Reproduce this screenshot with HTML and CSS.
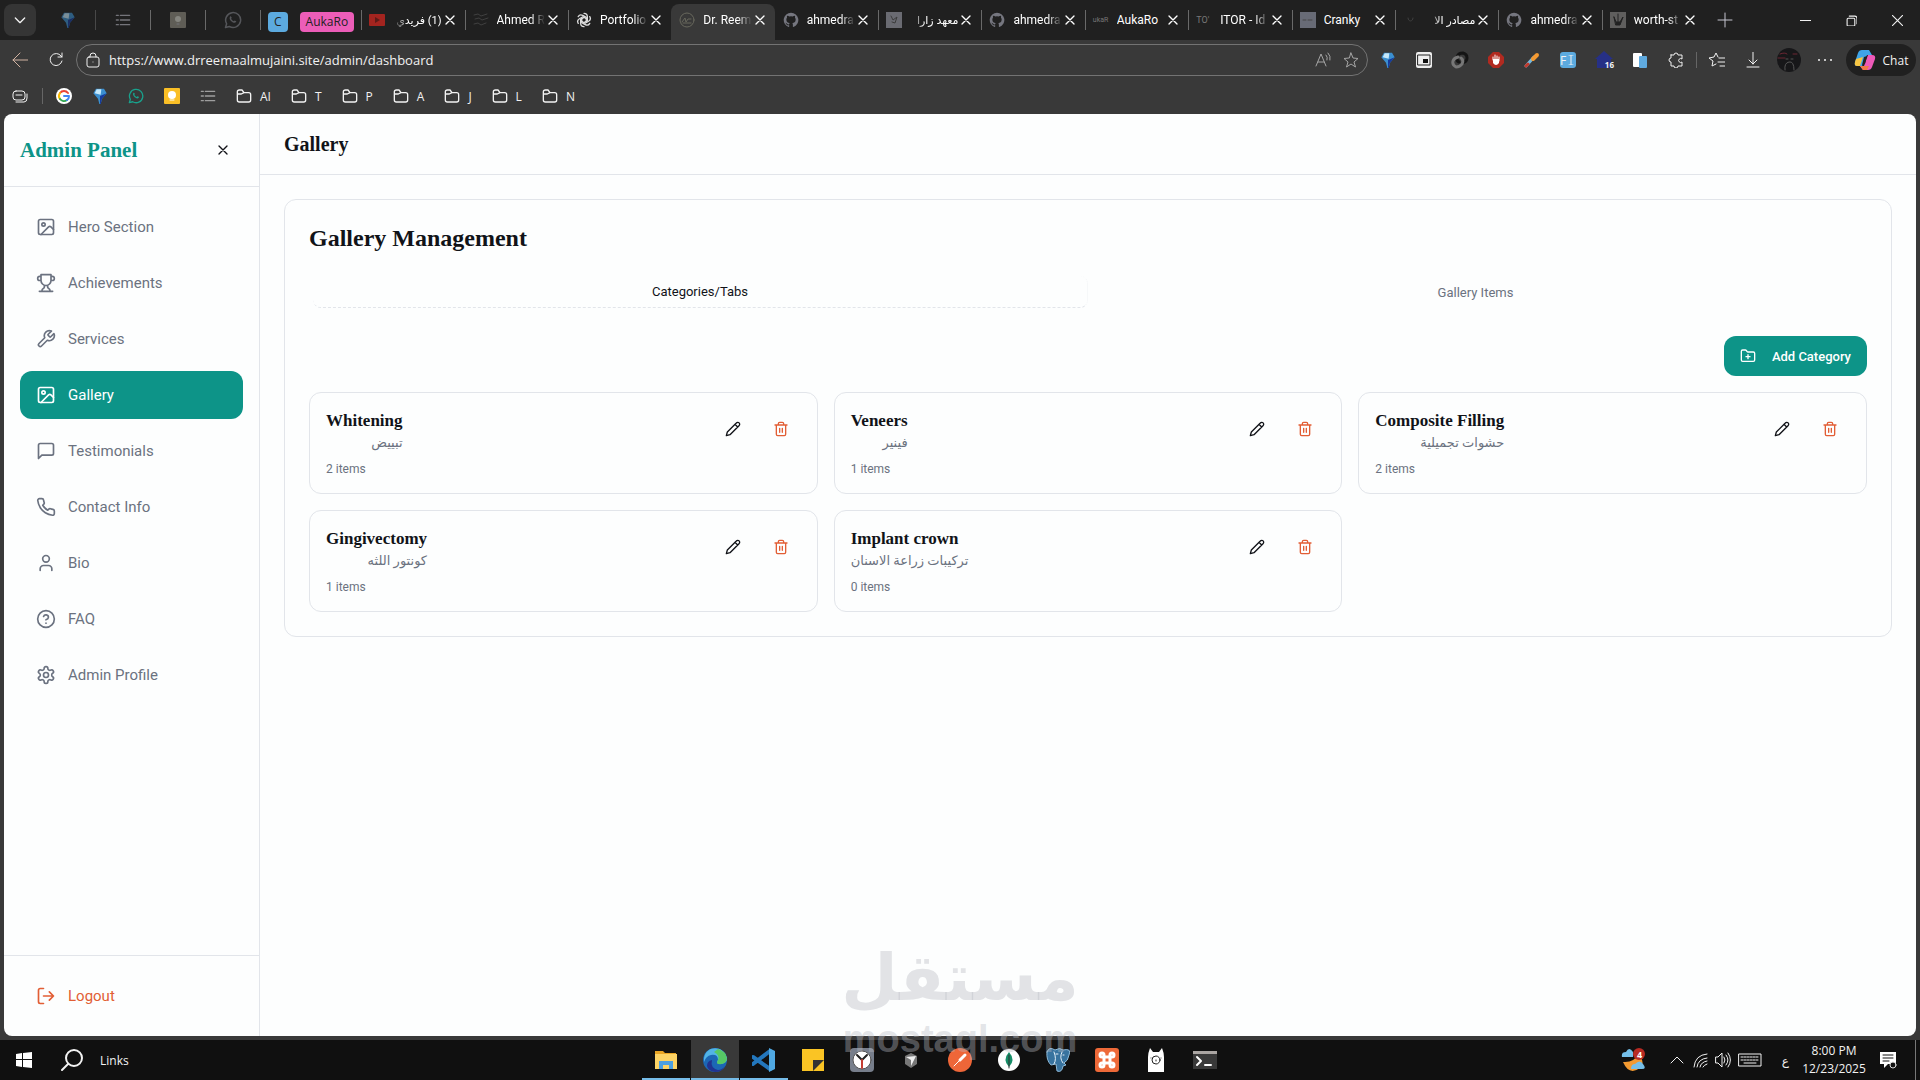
FILE: index.html
```html
<!DOCTYPE html>
<html lang="en">
<head>
    <meta charset="UTF-8">
    <meta name="viewport" content="width=device-width, initial-scale=1.0">
    <title>Dr. Reem - Admin Panel</title>
    <link rel="stylesheet" href="styles.css">
</head>
<body>

<svg class="defs" aria-hidden="true">
    <symbol id="x" viewBox="0 0 24 24"><path d="M18 6 6 18M6 6l12 12"/></symbol>
    <symbol id="chevron" viewBox="0 0 24 24"><path d="m5 9 7 7 7-7"/></symbol>
    <symbol id="image" viewBox="0 0 24 24"><rect x="3" y="3" width="18" height="18" rx="2"/><circle cx="9" cy="9" r="2"/><path d="m21 15-3.086-3.086a2 2 0 0 0-2.828 0L6 21"/></symbol>
    <symbol id="trophy" viewBox="0 0 24 24"><path d="M6 9H4.500a2.500 2.500 0 0 1 0-5H6M18 9h1.500a2.500 2.500 0 0 0 0-5H18M4 22h16M10 14.660V17c0 .55-.47.98-.97 1.210C7.850 18.750 7 20.240 7 22M14 14.660V17c0 .55.47.98.97 1.210C16.150 18.750 17 20.240 17 22M18 2H6v7a6 6 0 0 0 12 0V2Z"/></symbol>
    <symbol id="wrench" viewBox="0 0 24 24"><path d="M14.700 6.300a1 1 0 0 0 0 1.400l1.600 1.600a1 1 0 0 0 1.400 0l3.770-3.770a6 6 0 0 1-7.940 7.940l-6.910 6.910a2.120 2.120 0 0 1-3-3l6.910-6.910a6 6 0 0 1 7.940-7.940l-3.760 3.760z"/></symbol>
    <symbol id="message" viewBox="0 0 24 24"><path d="M21 15a2 2 0 0 1-2 2H7l-4 4V5a2 2 0 0 1 2-2h14a2 2 0 0 1 2 2z"/></symbol>
    <symbol id="phone" viewBox="0 0 24 24"><path d="M22 16.920v3a2 2 0 0 1-2.180 2 19.790 19.790 0 0 1-8.630-3.070 19.500 19.500 0 0 1-6-6 19.790 19.790 0 0 1-3.070-8.670A2 2 0 0 1 4.110 2h3a2 2 0 0 1 2 1.720 12.840 12.840 0 0 0 .7 2.810 2 2 0 0 1-.45 2.110L8.090 9.910a16 16 0 0 0 6 6l1.270-1.270a2 2 0 0 1 2.110-.45 12.840 12.840 0 0 0 2.810.7A2 2 0 0 1 22 16.920z"/></symbol>
    <symbol id="user" viewBox="0 0 24 24"><path d="M19 21v-2a4 4 0 0 0-4-4H9a4 4 0 0 0-4 4v2"/><circle cx="12" cy="7" r="4"/></symbol>
    <symbol id="help" viewBox="0 0 24 24"><circle cx="12" cy="12" r="10"/><path d="M9.090 9a3 3 0 0 1 5.830 1c0 2-3 3-3 3M12 17h.01"/></symbol>
    <symbol id="settings" viewBox="0 0 24 24"><path d="M12.220 2h-.44a2 2 0 0 0-2 2v.18a2 2 0 0 1-1 1.730l-.43.25a2 2 0 0 1-2 0l-.15-.08a2 2 0 0 0-2.730.73l-.22.38a2 2 0 0 0 .73 2.730l.15.1a2 2 0 0 1 1 1.720v.51a2 2 0 0 1-1 1.740l-.15.09a2 2 0 0 0-.73 2.730l.22.38a2 2 0 0 0 2.730.73l.15-.08a2 2 0 0 1 2 0l.43.25a2 2 0 0 1 1 1.730V20a2 2 0 0 0 2 2h.44a2 2 0 0 0 2-2v-.18a2 2 0 0 1 1-1.730l.43-.25a2 2 0 0 1 2 0l.15.08a2 2 0 0 0 2.730-.73l.22-.39a2 2 0 0 0-.73-2.730l-.15-.08a2 2 0 0 1-1-1.740v-.5a2 2 0 0 1 1-1.740l.15-.09a2 2 0 0 0 .73-2.730l-.22-.38a2 2 0 0 0-2.730-.73l-.15.08a2 2 0 0 1-2 0l-.43-.25a2 2 0 0 1-1-1.730V4a2 2 0 0 0-2-2z"/><circle cx="12" cy="12" r="3"/></symbol>
    <symbol id="logout" viewBox="0 0 24 24"><path d="M9 21H5a2 2 0 0 1-2-2V5a2 2 0 0 1 2-2h4M16 17l5-5-5-5M21 12H9"/></symbol>
    <symbol id="folder-plus" viewBox="0 0 24 24"><path d="M12 10v6M9 13h6M20 20a2 2 0 0 0 2-2V8a2 2 0 0 0-2-2h-7.900a2 2 0 0 1-1.690-.9L9.600 3.900A2 2 0 0 0 7.930 3H4a2 2 0 0 0-2 2v13a2 2 0 0 0 2 2Z"/></symbol>
    <symbol id="pencil" viewBox="0 0 24 24"><path d="M17 3a2.850 2.830 0 1 1 4 4L7.500 20.500 2 22l1.500-5.500ZM15 5l4 4"/></symbol>
    <symbol id="trash" viewBox="0 0 24 24"><path d="M3 6h18M19 6v14a2 2 0 0 1-2 2H7a2 2 0 0 1-2-2V6M8 6V4a2 2 0 0 1 2-2h4a2 2 0 0 1 2 2v2M10 11v6M14 11v6"/></symbol>
    <symbol id="folder" viewBox="0 0 24 24"><path d="M2 6a3 3 0 0 1 3-3h4l3 4h7a3 3 0 0 1 3 3v8a3 3 0 0 1-3 3H5a3 3 0 0 1-3-3ZM2 9h6l4-2"/></symbol>
    <symbol id="list" viewBox="0 0 24 24"><path d="M8 5h14M8 12h14M8 19h14M2 5h3M2 12h3M2 19h3"/></symbol>
    <symbol id="gem" viewBox="0 0 24 24"><g stroke="none"><path fill="#3b8fd0" d="M6 1h12l4 7-7 8-2 8h-2l-2-8-7-8z"/><path fill="#c5e8fa" d="M7 2h7l-1 8-9-2z"/><path fill="#173a9c" d="m22 8-7 8-2 8h-1V12z"/></g></symbol>
    <symbol id="whatsapp" viewBox="0 0 24 24"><path d="m2 22 1.500-5A10 10 0 1 1 7 20.600Z"/><path fill="currentColor" d="M8 7.500c1-1 1.500-.5 2.300 1.500l-.8 1.200c.8 1.600 1.800 2.500 3.500 3.300l1.300-1c2 .8 2.500 1.300 1.700 2.300-2.800 3-10.500-3.500-8-7.300Z" stroke="none"/></symbol>
    <symbol id="github" viewBox="0 0 24 24"><path fill="currentColor" stroke="none" d="M12 1a11 11 0 0 0-3.500 21.400c.6.1.8-.2.8-.5v-2c-3.100.6-3.900-1.300-3.900-1.300-.5-1.300-1.200-1.700-1.200-1.700-1-.7.100-.7.1-.7 1.100.1 1.700 1.200 1.700 1.200 1 1.700 2.600 1.200 3.300.9.100-.7.4-1.200.7-1.500-2.500-.3-5-1.200-5-5.400 0-1.200.4-2.200 1.100-3-.1-.3-.5-1.400.1-2.900 0 0 1-.3 3 1.100a10 10 0 0 1 5.600 0c2.100-1.400 3-1.100 3-1.100.6 1.500.2 2.600.1 2.900.7.800 1.100 1.800 1.100 3 0 4.200-2.500 5.100-5 5.400.4.400.8 1 .8 2.100v3c0 .3.200.6.8.5A11 11 0 0 0 12 1Z"/></symbol>
</svg>

<header class="browser">
    <div class="tabstrip">
        <button class="tab-menu" aria-label="Tab actions"><svg class="icon i16"><use href="#chevron"/></svg></button>
        <div class="pinned dim"><svg class="icon i16"><use href="#gem"/></svg></div>
        <div class="pinned"><svg class="icon i16"><use href="#list"/></svg></div>
        <div class="pinned"><svg class="icon i16" viewBox="0 0 16 16"><rect width="16" height="16" rx="1" fill="#5f5d56" stroke="none"/><circle cx="8" cy="7" r="3" fill="#85857f" stroke="none"/><path d="M7 12h2"/></svg></div>
        <div class="pinned dark"><svg class="icon i18"><use href="#whatsapp"/></svg></div>
        <div class="groups"><button class="group blue">C</button><button class="group pink">AukaRo</button></div>
        <div class="tabs">
            <div class="tab"><svg class="icon i16" viewBox="0 0 16 16"><rect y="2" width="16" height="12" rx="1" fill="#a3241f" stroke="none"/><path d="m6 5 5 3-5 3z" fill="#5c1b18" stroke="none"/></svg><span class="name" dir="rtl">(1) فريدي</span><button aria-label="Close tab"><svg class="icon"><use href="#x"/></svg></button></div>
            <div class="tab"><svg class="icon i16 faint" viewBox="0 0 16 16"><path d="m1 3 4-1 3 2 6-2M2 7l4-1 3 2 6-2M1 12l4-1 3 2 5-2"/></svg><span class="name">Ahmed R</span><button aria-label="Close tab"><svg class="icon"><use href="#x"/></svg></button></div>
            <div class="tab"><svg class="icon i16 pale" viewBox="0 0 24 24"><g stroke-width="2"><path id="petal" d="M12 2a5 5 0 0 1 5 5v6l-5 3"/><use href="#petal" transform="rotate(60 12 12)"/><use href="#petal" transform="rotate(120 12 12)"/><use href="#petal" transform="rotate(180 12 12)"/><use href="#petal" transform="rotate(240 12 12)"/><use href="#petal" transform="rotate(300 12 12)"/></g></svg><span class="name">Portfolio</span><button aria-label="Close tab"><svg class="icon"><use href="#x"/></svg></button></div>
            <div class="tab active"><svg class="icon i16 olive" viewBox="0 0 16 16"><circle cx="8" cy="8" r="7"/><path d="m3 10 3-4 1 4 2-3h3M4 11h8"/></svg><span class="name">Dr. Reem</span><button aria-label="Close tab"><svg class="icon"><use href="#x"/></svg></button></div>
            <div class="tab"><svg class="icon i16"><use href="#github"/></svg><span class="name">ahmedra</span><button aria-label="Close tab"><svg class="icon"><use href="#x"/></svg></button></div>
            <div class="tab"><svg class="icon i16" viewBox="0 0 16 16"><rect width="16" height="16" fill="#6a6b72" stroke="none"/><path d="m5 4 2 4 4-3-2 6-3-1" stroke="#3c3c3c"/></svg><span class="name" dir="rtl">معهد زارا</span><button aria-label="Close tab"><svg class="icon"><use href="#x"/></svg></button></div>
            <div class="tab"><svg class="icon i16"><use href="#github"/></svg><span class="name">ahmedra</span><button aria-label="Close tab"><svg class="icon"><use href="#x"/></svg></button></div>
            <div class="tab"><span class="favtext">ukaR</span><span class="name short">AukaRo</span><button aria-label="Close tab"><svg class="icon"><use href="#x"/></svg></button></div>
            <div class="tab"><span class="favtext big">TO'</span><span class="name">ITOR - Id</span><button aria-label="Close tab"><svg class="icon"><use href="#x"/></svg></button></div>
            <div class="tab"><svg class="icon i16" viewBox="0 0 16 16"><rect width="16" height="16" fill="#686b76" stroke="none"/><path d="M3 8h3M8 8h4" stroke="#474747"/></svg><span class="name short">Cranky</span><button aria-label="Close tab"><svg class="icon"><use href="#x"/></svg></button></div>
            <div class="tab"><svg class="icon i16 faint" viewBox="0 0 16 16"><path d="M5 6c0 4 5 4 5 0"/></svg><span class="name" dir="rtl">مصادر الا</span><button aria-label="Close tab"><svg class="icon"><use href="#x"/></svg></button></div>
            <div class="tab"><svg class="icon i16"><use href="#github"/></svg><span class="name">ahmedra</span><button aria-label="Close tab"><svg class="icon"><use href="#x"/></svg></button></div>
            <div class="tab"><svg class="icon i16" viewBox="0 0 16 16"><rect width="16" height="16" fill="#605f5e" stroke="none"/><path d="M8 2v10M4 5l2 5h4l3-5-3 8H6z" fill="#222" stroke="#222"/></svg><span class="name">worth-st</span><button aria-label="Close tab"><svg class="icon"><use href="#x"/></svg></button></div>
        </div>
        <button class="new-tab" aria-label="New tab"><svg class="icon i16" viewBox="0 0 16 16"><path d="M8 1v14M1 8h14"/></svg></button>
        <div class="window-controls">
            <button aria-label="Minimize"><svg class="icon" viewBox="0 0 10 10"><path d="M0 5h10"/></svg></button>
            <button aria-label="Restore"><svg class="icon" viewBox="0 0 10 10"><rect x="1" y="3" width="7" height="7" rx="1"/><path d="M3 1h5a2 2 0 0 1 2 2v5"/></svg></button>
            <button aria-label="Close"><svg class="icon" viewBox="0 0 10 10"><path d="m0 0 10 10M10 0 0 10"/></svg></button>
        </div>
    </div>

    <div class="toolbar">
        <button class="back" aria-label="Back"><svg class="icon i16" viewBox="0 0 16 16"><path d="M16 8H1M8 1 1 8l7 7"/></svg></button>
        <button aria-label="Reload"><svg class="icon i16" viewBox="0 0 16 16"><path d="M14 9a6 6 0 1 1-1-5l1 1M14 1v4h-4"/></svg></button>
        <div class="address">
            <svg class="icon i16" viewBox="0 0 16 16"><rect x="2" y="5" width="12" height="10" rx="2"/><path d="M5 5V4a3 3 0 0 1 6 0v1M8 10h.01"/></svg>
            <input type="text" aria-label="Address" value="https://www.drreemaalmujaini.site/admin/dashboard">
            <svg class="icon i16 muted" viewBox="0 0 16 16"><path d="M1 14 6 2l5 12M3 10h6M11 3q2 2 1 5M13 1q3 3 2 7"/></svg>
            <svg class="icon i16 muted star" viewBox="0 0 16 16"><path d="m8 1 2 5 5 .5-4 3.500 1.500 5L8 12l-4.500 3L5 10 1 6.500 6 6z"/></svg>
        </div>
        <div class="extensions">
            <button aria-label="Gem"><svg class="icon i16"><use href="#gem"/></svg></button>
            <button aria-label="Picture in picture"><svg class="icon i16" viewBox="0 0 16 16"><rect width="16" height="16" rx="2" fill="#eee" stroke="none"/><rect x="2" y="3" width="12" height="10" fill="#eee" stroke="#222"/><rect x="7" y="7" width="5" height="4" fill="#111" stroke="none"/></svg></button>
            <button aria-label="Links"><svg class="icon i18" viewBox="0 0 18 18"><path d="M8 11q-3-1-2-5 1-4 6-4 4 1 4 5 0 4-5 5" stroke="#141414" stroke-width="3"/><path d="M10 7q3 2 1 6-2 3-6 3-4-2-3-6 1-3 5-4" stroke="#777" stroke-width="3"/></svg></button>
            <button aria-label="Blocker"><svg class="icon i16" viewBox="0 0 16 16"><path d="M5 0h6l5 5v6l-5 5H5l-5-5V5z" fill="#b12a20" stroke="none"/><path d="M5 8V5M7 8V3M9 8V4M11 9V5" stroke="#fff"/><path d="M5 7h6v4q-3 4-6 0z" fill="#fff" stroke="none"/></svg></button>
            <button aria-label="Color picker"><svg class="icon i16" viewBox="0 0 16 16"><path d="m2 14 8-9" stroke="#74b8de" stroke-width="3"/><path d="m9 7 4-4" stroke="#f49a32" stroke-width="4"/><path d="m2 14 2-2" stroke="#c33a2d" stroke-width="3"/></svg></button>
            <button aria-label="Font finder" class="font-ext">F<svg class="icon" viewBox="0 0 10 10"><path d="M3 0h4M5 0v10M3 10h4"/></svg></button>
            <button aria-label="Home counter" class="count-ext"><svg class="icon i18" viewBox="0 0 18 18"><path d="m9 0 9 8h-2v9H2V8H0z" fill="#263086" stroke="none"/></svg><b>16</b></button>
            <button aria-label="Clipboard"><svg class="icon i16" viewBox="0 0 16 16"><rect x="1" y="1" width="9" height="14" rx="1" fill="#fff" stroke="none"/><rect x="7" y="4" width="8" height="12" rx="1" fill="#5faadf" stroke="none"/></svg></button>
            <button aria-label="Extensions"><svg class="icon i16" viewBox="0 0 16 16"><path d="M3 3h3a2 2 0 1 1 4 0h4v4a2 2 0 1 0 0 3v4h-4a2 2 0 1 1-4 0H3v-4a2 2 0 1 1 0-4V3z"/></svg></button>
            <span class="divider"></span>
            <button aria-label="Favorites"><svg class="icon i16" viewBox="0 0 16 16"><path d="M9 5 7 1 5 5l-5 1 4 3-1 5 4-2M10 6h6M9 10h7M11 14h5"/></svg></button>
            <button aria-label="Downloads"><svg class="icon i16" viewBox="0 0 16 16"><path d="M8 0v12M4 8l4 4 4-4M2 15h12"/></svg></button>
            <button aria-label="Profile"><svg class="icon i24" viewBox="0 0 24 24"><circle cx="12" cy="12" r="12" fill="#171719" stroke="none"/><path d="M3 6q5-2 7 0M1 10h7M16 6h4" stroke="#6c2633"/><path d="M8 22q-1-7 4-8t5 8M9 11h2M14 11h2" stroke="#555"/></svg></button>
            <button aria-label="More"><svg class="icon i16" viewBox="0 0 16 16"><path d="M2 8h.01M8 8h.01M14 8h.01" stroke-width="2"/></svg></button>
        </div>
        <button class="chat"><svg class="icon i22" viewBox="0 0 22 22"><g stroke="none"><path fill="#3ea4e8" d="M8 1h7l3 5h-5L8 17H3Q0 17 1 13L4 4q1-3 4-3z"/><path fill="#f6c543" d="m2 10 7-2-3 9H3Q0 17 1 13z"/><path fill="#ee59b8" d="M14 6h4q4 0 3 4l-3 8q-1 3-4 3H9l-3-4h4z"/><path fill="#ef7847" d="M6 17h9l-2 4H9z"/><path fill="#222" d="m10 8 3-1-2 8-3 1z"/></g></svg>Chat</button>
    </div>

    <nav class="bookmarks">
        <a href="#" aria-label="Wallet"><svg class="icon i16" viewBox="0 0 16 16"><rect x="1" y="3" width="12" height="9" rx="3"/><path d="M4 7h6M4 14h8q3 0 3-4V6"/></svg></a>
        <span class="divider"></span>
        <a href="#" aria-label="Google"><svg class="icon i16" viewBox="0 0 16 16"><circle cx="8" cy="8" r="8" fill="#fff" stroke="none"/><g stroke-width="2"><path d="M12 5a5 5 0 0 0-8 0" stroke="#ea4335"/><path d="M4 5a5 5 0 0 0 0 6" stroke="#fbbc05"/><path d="M4 11a5 5 0 0 0 7 1" stroke="#34a853"/><path d="M11 12q2-1 2-4H8" stroke="#4285f4"/></g></svg></a>
        <a href="#" aria-label="Gem"><svg class="icon i16"><use href="#gem"/></svg></a>
        <a href="#" aria-label="WhatsApp" class="green"><svg class="icon i16"><use href="#whatsapp"/></svg></a>
        <a href="#" aria-label="Keep"><svg class="icon i16" viewBox="0 0 16 16"><rect width="16" height="16" rx="1" fill="#fabf26" stroke="none"/><circle cx="8" cy="7" r="4" fill="#fff" stroke="none"/><path d="M6 12h4" stroke="#fff"/></svg></a>
        <a href="#" aria-label="List" class="dim"><svg class="icon i16"><use href="#list"/></svg></a>
        <a href="#" class="folder"><svg class="icon i16"><use href="#folder"/></svg>AI</a>
        <a href="#" class="folder"><svg class="icon i16"><use href="#folder"/></svg>T</a>
        <a href="#" class="folder"><svg class="icon i16"><use href="#folder"/></svg>P</a>
        <a href="#" class="folder"><svg class="icon i16"><use href="#folder"/></svg>A</a>
        <a href="#" class="folder"><svg class="icon i16"><use href="#folder"/></svg>J</a>
        <a href="#" class="folder"><svg class="icon i16"><use href="#folder"/></svg>L</a>
        <a href="#" class="folder"><svg class="icon i16"><use href="#folder"/></svg>N</a>
    </nav>
</header>

<div class="page">
    <aside class="sidebar">
        <div class="sidebar-header">
            <h1>Admin Panel</h1>
            <button class="icon-button" aria-label="Close menu"><svg class="icon i16"><use href="#x"/></svg></button>
        </div>
        <nav class="menu">
            <a href="#"><svg class="icon i20"><use href="#image"/></svg>Hero Section</a>
            <a href="#"><svg class="icon i20"><use href="#trophy"/></svg>Achievements</a>
            <a href="#"><svg class="icon i20"><use href="#wrench"/></svg>Services</a>
            <a href="#" class="active"><svg class="icon i20"><use href="#image"/></svg>Gallery</a>
            <a href="#"><svg class="icon i20"><use href="#message"/></svg>Testimonials</a>
            <a href="#"><svg class="icon i20"><use href="#phone"/></svg>Contact Info</a>
            <a href="#"><svg class="icon i20"><use href="#user"/></svg>Bio</a>
            <a href="#"><svg class="icon i20"><use href="#help"/></svg>FAQ</a>
            <a href="#"><svg class="icon i20"><use href="#settings"/></svg>Admin Profile</a>
        </nav>
        <div class="sidebar-footer">
            <button class="logout"><svg class="icon i20"><use href="#logout"/></svg>Logout</button>
        </div>
    </aside>

    <main>
        <div class="topbar"><h2>Gallery</h2></div>
        <section class="panel">
            <h3>Gallery Management</h3>
            <div class="switch" role="tablist">
                <button role="tab" aria-selected="true">Categories/Tabs</button>
                <button role="tab" aria-selected="false">Gallery Items</button>
            </div>
            <div class="actions">
                <button class="add"><svg class="icon i16"><use href="#folder-plus"/></svg>Add Category</button>
            </div>
            <div class="cards">
                <article class="card">
                    <div class="info"><h4>Whitening</h4><p dir="rtl">تبييض</p><small>2 items</small></div>
                    <button class="icon-button" aria-label="Edit"><svg class="icon i16"><use href="#pencil"/></svg></button>
                    <button class="icon-button delete" aria-label="Delete"><svg class="icon i16"><use href="#trash"/></svg></button>
                </article>
                <article class="card">
                    <div class="info"><h4>Veneers</h4><p dir="rtl">فينير</p><small>1 items</small></div>
                    <button class="icon-button" aria-label="Edit"><svg class="icon i16"><use href="#pencil"/></svg></button>
                    <button class="icon-button delete" aria-label="Delete"><svg class="icon i16"><use href="#trash"/></svg></button>
                </article>
                <article class="card">
                    <div class="info"><h4>Composite Filling</h4><p dir="rtl">حشوات تجميلية</p><small>2 items</small></div>
                    <button class="icon-button" aria-label="Edit"><svg class="icon i16"><use href="#pencil"/></svg></button>
                    <button class="icon-button delete" aria-label="Delete"><svg class="icon i16"><use href="#trash"/></svg></button>
                </article>
                <article class="card">
                    <div class="info"><h4>Gingivectomy</h4><p dir="rtl">كونتور اللثه</p><small>1 items</small></div>
                    <button class="icon-button" aria-label="Edit"><svg class="icon i16"><use href="#pencil"/></svg></button>
                    <button class="icon-button delete" aria-label="Delete"><svg class="icon i16"><use href="#trash"/></svg></button>
                </article>
                <article class="card">
                    <div class="info"><h4>Implant crown</h4><p dir="rtl">تركيبات زراعة الاسنان</p><small>0 items</small></div>
                    <button class="icon-button" aria-label="Edit"><svg class="icon i16"><use href="#pencil"/></svg></button>
                    <button class="icon-button delete" aria-label="Delete"><svg class="icon i16"><use href="#trash"/></svg></button>
                </article>
            </div>
        </section>
    </main>
</div>

<footer class="taskbar">
    <div class="start">
        <button aria-label="Start"><svg class="icon i16" viewBox="0 0 16 16"><path d="m0 2 6-1v6H0zM7 1l9-1v7H7zM0 8h6v7l-6-1zM7 8h9v8l-9-1z" fill="#fff" stroke="none"/></svg></button>
        <button aria-label="Search"><svg class="icon i22" viewBox="0 0 22 22"><circle cx="13" cy="9" r="8" stroke-width="2"/><path d="m7 15-6 6" stroke-width="2"/></svg></button>
        <span>Links</span>
    </div>
    <div class="apps">
        <button class="open" aria-label="File Explorer"><svg class="icon i24" viewBox="0 0 24 24"><g stroke="none"><path fill="#e9a524" d="M1 3h8l2 2h11v5H1z"/><path fill="#fcd365" d="M1 6h22v15H1z"/><path fill="#4c9fe0" d="M5 13h14v8h-4v-4H9v4H5z"/></g></svg></button>
        <button class="open current" aria-label="Edge"><svg class="icon i24" viewBox="0 0 24 24"><g stroke="none"><circle cx="12" cy="12" r="12" fill="#1c67b5"/><path fill="#52b4e6" d="M1 10C3-3 21-3 24 10q0 6-8 6-3-1-1-4 0-6-7-5-5 1-7 7z"/><path fill="#56c965" d="M15 1q8 2 9 10-1 6-9 5-2-1 0-4 2-5-4-8z"/><path fill="#223391" d="M9 12q-2 8 6 10 4 0 7-4-3 6-10 6-7-1-8-6 0-5 5-6z"/></g></svg></button>
        <button class="open" aria-label="VS Code"><svg class="icon i24" viewBox="0 0 24 24"><path d="m1 9 17 12M1 16 18 3" stroke="#2377bd" stroke-width="4"/><path fill="#50a9e3" stroke="none" d="m17 0 6 3v18l-6 3z"/></svg></button>
        <button aria-label="Sticky Notes"><svg class="icon i24" viewBox="0 0 24 24"><path d="M1 1h22v22H1z" fill="#fac424" stroke="none"/><path d="M12 12h11L12 23z" fill="#333" stroke="none"/></svg></button>
        <button aria-label="Clock"><svg class="icon i24" viewBox="0 0 24 24"><rect width="24" height="24" rx="4" fill="#777e8b" stroke="none"/><circle cx="12" cy="12" r="9" fill="#fff" stroke="#555"/><path d="m7 7 5 5 5-5" stroke="#222" stroke-width="2"/><path d="M12 12v8" stroke="#c53c31" stroke-width="2"/></svg></button>
        <button aria-label="Cursor"><svg class="icon i16" viewBox="0 0 16 16"><path d="m8 1 6 3v8l-6 4-6-4V4z" fill="#777" stroke="none"/><path d="m3 5 10-1-5 10V8z" fill="#eee" stroke="none"/></svg></button>
        <button aria-label="Postman"><svg class="icon i24" viewBox="0 0 24 24"><circle cx="12" cy="12" r="12" fill="#ee6638" stroke="none"/><path d="m6 18 7-7" stroke="#fff"/><path d="m12 12 5-5" stroke="#fff" stroke-width="3"/></svg></button>
        <button aria-label="MongoDB"><svg class="icon i24" viewBox="0 0 24 24"><circle cx="12" cy="12" r="11" fill="#fff" stroke="none"/><path d="M12 4q7 8 0 15-7-7 0-15" fill="#168e68" stroke="none"/><path d="M12 7v13" stroke="#333"/></svg></button>
        <button aria-label="PostgreSQL"><svg class="icon i24" viewBox="0 0 24 24"><path d="M1 4q2-6 8-2 5-3 8 0 9-2 6 5-1 6-5 8l2 2-3 1q-1 7-6 5l-1-7-5 1Q0 12 1 4Z" fill="#38739f" stroke="#8db9d8"/><path d="M8 4q3 7 0 12M16 4q-3 6 1 11M10 6h2M17 7h1" stroke="#e4f0f8"/></svg></button>
        <button aria-label="XAMPP"><svg class="icon i24" viewBox="0 0 24 24"><rect width="24" height="24" rx="3" fill="#ee6938" stroke="none"/><g stroke="#fff" stroke-width="3"><rect x="9" y="9" width="6" height="6"/><path d="M9 9H7a2 2 0 1 1 2-2zM15 9h2a2 2 0 1 0-2-2zM9 15H7a2 2 0 1 0 2 2zM15 15h2a2 2 0 1 1-2 2z"/></g></svg></button>
        <button aria-label="Ollama"><svg class="icon i24" viewBox="0 0 24 24"><path d="M4 24V9q0-4 2-9l3 4h6l3-4q2 5 2 9v15z" fill="#fff" stroke="none"/><circle cx="12" cy="12" r="4" stroke="#222"/><path d="M7 10h.01M17 10h.01M12 12v1" stroke="#222"/></svg></button>
        <button aria-label="Terminal"><svg class="icon i24" viewBox="0 0 24 24"><path d="M0 3h24v18H0z" fill="#393939" stroke="none"/><path d="M0 3h24v3H0z" fill="#aaa5a2" stroke="none"/><path d="m4 9 4 4-4 4M12 17h6" stroke="#fff" stroke-width="2"/></svg></button>
    </div>
    <div class="tray">
        <svg class="icon i24 weather" viewBox="0 0 24 24"><g stroke="none"><path d="M2 14q11 1 15-8 8 8 2 14-11 8-17-6z" fill="#f39a31"/><path d="M1 9q-1-5 4-5 3-6 7 0v5zM10 21q0-5 4-5 5-5 8 0 4 5-1 5z" fill="#75bfe9"/><circle cx="18" cy="6" r="6" fill="#b82a23"/></g><text x="16" y="10">4</text></svg>
        <svg class="icon i16 up" viewBox="0 0 16 16"><path d="m2 11 6-6 6 6"/></svg>
        <svg class="icon i16" viewBox="0 0 16 16"><path d="M2 15Q3 3 15 2M5 15q1-8 10-9M8 15q1-5 7-6M11 15q1-2 4-3"/></svg>
        <svg class="icon i16" viewBox="0 0 16 16"><path d="M1 5h2l4-4v14l-4-4H1zM9 5q2 3 0 6M11 3q4 5 0 10M13 1q5 7 0 14"/></svg>
        <svg class="icon keyboard" viewBox="0 0 24 14"><rect x="1" y="1" width="22" height="12"/><path d="M3 4h18M3 7h18" stroke-dasharray="2 1"/><path d="M6 10h12"/></svg>
        <span class="lang">ع</span>
        <div class="clock"><span>8:00 PM</span><span>12/23/2025</span></div>
        <svg class="icon i18" viewBox="0 0 18 18"><path d="M1 1h16v12H9l-4 4v-4H1z" fill="#fff" stroke="none"/><path d="M4 4h10M4 7h10M4 10h6" stroke="#111"/><circle cx="14" cy="14" r="3" fill="#111" stroke="#ddd"/></svg>
        <span class="edge"></span>
    </div>
</footer>

<div class="watermark"><strong lang="ar">مستقل</strong><b>mostaql.com</b></div>

</body>
</html>
```
FILE: styles.css
```css
* {
    box-sizing: border-box;
    margin: 0;
    padding: 0;
}

body {
    display: flex;
    flex-direction: column;
    height: 100vh;
    overflow: hidden;
    position: relative;
    background-color: #393939;
    color: #111318;
    font-family: Roboto, "DejaVu Sans", sans-serif;
    font-size: 13px;
}

button, input {
    font: inherit;
    color: inherit;
    background: none;
    border: none;
}

a {
    color: inherit;
    text-decoration: none;
}

.defs {
    position: absolute;
    width: 0;
    height: 0;
}

.icon {
    flex: none;
    fill: none;
    stroke: currentColor;
    stroke-width: 1;
    stroke-linecap: round;
    stroke-linejoin: round;
    width: 10px;
    height: 10px;
}

.icon use {
    stroke-width: 2;
}

.i16 { width: 16px; height: 16px; }
.i18 { width: 18px; height: 18px; }
.i20 { width: 20px; height: 20px; }
.i22 { width: 22px; height: 22px; }
.i24 { width: 24px; height: 24px; }

/* browser bars */
.browser {
    color: #f2f2f2;
    font-family: "Open Sans", "DejaVu Sans", sans-serif;
    font-size: 12px;
    height: 114px;
    flex: none;
}

.browser button, .browser .pinned, .browser a {
    display: flex;
    align-items: center;
    justify-content: center;
}

.tabstrip {
    display: flex;
    align-items: center;
    height: 40px;
    background-color: #202020;
}

.tab-menu {
    width: 32px;
    height: 32px;
    margin: 0 5px 0 4px;
    border-radius: 8px;
    background-color: #353535;
}

.pinned {
    width: 55px;
    height: 20px;
    border-right: 1px solid #696969;
    color: #75757b;
}

.dim { opacity: 0.55; }
.dark { color: #55565a; }
.faint { color: #404040; }
.pale { color: #ddd; }
.olive { color: #68685d; }
.muted { color: #a6a6a6; }
.green { color: #19a18c; }

.groups {
    display: flex;
    gap: 12px;
    padding: 3px 7px 0;
}

.group {
    height: 20px;
    padding: 0 6px;
    border-radius: 4px;
}

.browser .group {
    color: #222;
}

.blue { background-color: #5caadf; }
.pink { background-color: #ec5db8; }

.tabs {
    display: flex;
    align-items: center;
    align-self: stretch;
    flex: 0 1 70%;
    min-width: 0;
    font-family: Roboto, "DejaVu Sans", sans-serif;
}

.tab {
    display: flex;
    align-items: center;
    gap: 8px;
    flex: 1;
    min-width: 0;
    height: 20px;
    padding: 0 9px 0 7px;
    border-left: 1px solid #696969;
    color: #75767f;
}

.tab .name + button {
    margin-left: -6px;
}

.tab.active {
    align-self: flex-end;
    height: 36px;
    padding-bottom: 4px;
    border-color: transparent;
    border-radius: 8px 8px 0 0;
    background-color: #393939;
}

.tab.active + .tab {
    border-color: transparent;
}

.name {
    flex: 1;
    min-width: 0;
    overflow: hidden;
    white-space: nowrap;
    color: #fff;
    mask-image: linear-gradient(to right, #000 70%, transparent);
}

.name.short {
    mask-image: none;
}

.name[dir="rtl"] {
    font-size: 11px;
    mask-image: linear-gradient(to left, #000 70%, transparent);
}

.tab button {
    width: 12px;
    color: #fff;
}

.tab button .icon {
    width: 16px;
    height: 16px;
}

.favtext {
    width: 16px;
    font-size: 7px;
    color: #777;
}

.favtext.big {
    font-size: 9px;
}

.new-tab {
    width: 40px;
    color: #c5c5d0;
}

.window-controls {
    display: flex;
    margin-left: auto;
}

.window-controls button {
    width: 46px;
    height: 40px;
}

.window-controls .icon {
    width: 11px;
    height: 11px;
}

.toolbar {
    display: flex;
    align-items: center;
    height: 40px;
    padding: 0 4px 0 2px;
}

.toolbar button {
    width: 36px;
    flex: none;
}

.toolbar .back {
    color: #d2b3a2;
}

.address {
    display: flex;
    align-items: center;
    gap: 8px;
    flex: 1;
    height: 32px;
    margin-left: 2px;
    padding: 0 8px;
    border: 1px solid #737373;
    border-radius: 16px;
}

.address input {
    flex: 1;
    min-width: 0;
    font-size: 13px;
}

.address .star {
    margin-left: 4px;
}

.extensions {
    display: flex;
    align-items: center;
    margin-left: 2px;
}

.divider {
    width: 1px;
    height: 16px;
    margin: 0 2px;
    background-color: #666;
}

.extensions .font-ext {
    width: 16px;
    height: 16px;
    margin: 0 10px;
    border-radius: 3px;
    background-color: #5caadf;
}

.count-ext {
    position: relative;
}

.count-ext b {
    position: absolute;
    right: 8px;
    bottom: -1px;
    font-size: 8px;
    line-height: 10px;
}

.toolbar .chat {
    gap: 7px;
    width: 70px;
    height: 32px;
    margin-left: 3px;
    border-radius: 16px;
    background-color: #202020;
}

.bookmarks {
    display: flex;
    align-items: center;
    gap: 20px;
    height: 32px;
    padding-left: 12px;
}

.bookmarks .divider {
    margin: 0 -7px 0 -6px;
}

.bookmarks .folder {
    gap: 8px;
}

/* admin page */
.page {
    display: flex;
    flex: 1;
    min-height: 0;
    margin: 0 4px 4px;
    border-radius: 8px;
    overflow: hidden;
    background-color: #fdfefe;
}

h1, h2, h3, h4 {
    font-family: "Liberation Serif", serif;
    font-weight: bold;
}

.sidebar {
    display: flex;
    flex-direction: column;
    width: 256px;
    flex: none;
    border-right: 1px solid #e2e5ea;
}

.sidebar-header {
    display: flex;
    align-items: center;
    justify-content: space-between;
    height: 73px;
    padding: 0 16px;
    border-bottom: 1px solid #e2e5ea;
}

.sidebar-header h1 {
    font-size: 21px;
    color: #0d9488;
}

.icon-button {
    display: flex;
    align-items: center;
    justify-content: center;
    width: 40px;
    height: 40px;
    flex: none;
}

.menu {
    display: flex;
    flex-direction: column;
    gap: 8px;
    flex: 1;
    padding: 16px;
}

.menu a, .logout {
    display: flex;
    align-items: center;
    gap: 12px;
    width: 100%;
    height: 48px;
    padding: 0 16px;
    border-radius: 12px;
    color: #6b7280;
    font-size: 15px;
}

.menu a.active {
    background-color: #0d9488;
    color: #fff;
}

.sidebar-footer {
    padding: 16px;
    border-top: 1px solid #e2e5ea;
}

.logout, .delete {
    color: #e25e35;
}

main {
    flex: 1;
    min-width: 0;
}

.topbar {
    display: flex;
    align-items: center;
    height: 61px;
    padding: 0 24px;
    border-bottom: 1px solid #e2e5ea;
}

.topbar h2 {
    font-size: 20px;
}

.panel {
    margin: 24px;
    padding: 24px;
    border: 1px solid #e2e5ea;
    border-radius: 12px;
}

.panel h3 {
    font-size: 24px;
    line-height: 28px;
}

.switch {
    display: grid;
    grid-template-columns: 1fr 1fr;
    height: 40px;
    margin: 20px 0 24px;
    padding: 4px;
}

.switch button {
    color: #6b7280;
}

.switch button[aria-selected="true"] {
    border-bottom: 1px dashed #e2e5ea;
    border-right: 1px dotted #f0f2f4;
    border-radius: 8px;
    color: #111318;
}

.actions {
    display: flex;
    justify-content: flex-end;
    margin-bottom: 16px;
}

.add {
    display: flex;
    align-items: center;
    gap: 16px;
    height: 40px;
    padding: 0 16px;
    border-radius: 12px;
    background-color: #0d9488;
    color: #fff;
    font-weight: 500;
}

.cards {
    display: grid;
    grid-template-columns: repeat(3, 1fr);
    gap: 16px;
}

.card {
    display: flex;
    align-items: flex-start;
    gap: 8px;
    padding: 16px;
    border: 1px solid #e2e5ea;
    border-radius: 12px;
}

.info {
    margin-right: auto;
    color: #6b7280;
}

.info h4 {
    font-size: 17px;
    line-height: 24px;
    color: #111318;
}

.info p {
    line-height: 20px;
}

.info small {
    display: block;
    margin-top: 8px;
    font-size: 12px;
    line-height: 16px;
}

/* taskbar */
.taskbar {
    display: grid;
    grid-template-columns: 1fr auto 1fr;
    height: 40px;
    flex: none;
    background-color: #101010;
    color: #f2f2f2;
    font-family: "Open Sans", "DejaVu Sans", sans-serif;
    font-size: 12px;
}

.taskbar button {
    display: flex;
    align-items: center;
    justify-content: center;
    width: 48px;
    height: 40px;
}

.start {
    display: flex;
    align-items: center;
}

.start span {
    margin-left: 4px;
}

.apps {
    display: flex;
    gap: 1px;
    margin-right: 50px;
}

.apps .open {
    border-top: 2px solid transparent;
    border-bottom: 2px solid #76bce8;
}

.apps .current {
    background-color: #393939;
}

.tray {
    display: flex;
    align-items: center;
    justify-content: flex-end;
    gap: 7px;
}

.weather {
    margin-right: 17px;
}

.weather text {
    fill: #fff;
    stroke: none;
    font-size: 9px;
    font-weight: bold;
}

.keyboard {
    width: 24px;
    height: 14px;
}

.lang {
    width: 20px;
    text-align: right;
}

.clock {
    display: flex;
    flex-direction: column;
    align-items: center;
    width: 76px;
    line-height: 18px;
}

.edge {
    width: 1px;
    height: 40px;
    margin: 0 4px 0 11px;
    background-color: #777;
}

.watermark {
    position: absolute;
    left: 50%;
    bottom: 20px;
    transform: translateX(-50%);
    display: flex;
    flex-direction: column;
    align-items: center;
    gap: 2px;
    color: rgba(186, 188, 196, 0.4);
    pointer-events: none;
}

.watermark strong {
    font-family: "DejaVu Sans", sans-serif;
    font-size: 65px;
    line-height: 76px;
}

.watermark b {
    font-family: "Liberation Sans", sans-serif;
    font-size: 38px;
    line-height: 42px;
}
```
